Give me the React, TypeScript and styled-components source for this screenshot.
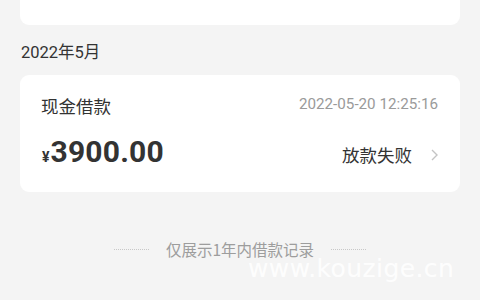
import styled, { createGlobalStyle } from 'styled-components';

const GlobalStyle = createGlobalStyle`
  html, body {
    margin: 0;
    background: #f4f4f4;
  }
  body {
    font-family: Roboto, 'Noto Sans CJK SC', sans-serif;
    color: #333;
  }
`;

const Page = styled.div`
  position: relative;
  width: 480px;
  height: 300px;
  overflow: hidden;
  padding: 0 20px;
  box-sizing: border-box;
  background: #f4f4f4;
`;

const Card = styled.div`
  background: #fff;
  border-radius: 9px;
`;

const TopCard = styled(Card)`
  height: 65px;
  margin-top: -40px;
`;

const MonthLabel = styled.div`
  margin: 17px 0 11px 1px;
  font-size: 16.5px;
  line-height: 22px;
  color: #333;
`;

const LoanCard = styled(Card)`
  display: flex;
  flex-direction: column;
  gap: 16px;
  padding: 18px 22px 17px 21px;
`;

const Row = styled.div`
  display: flex;
  align-items: center;
  justify-content: space-between;
`;

const Title = styled.div`
  font-size: 17.5px;
  line-height: 25px;
  color: #333;
  font-family: 'Noto Sans CJK SC', sans-serif;
`;

const DateText = styled.div`
  font-size: 15.2px;
  line-height: 20px;
  color: #9a9a9a;
  margin-top: -4px;
`;

const Amount = styled.div`
  display: flex;
  align-items: baseline;
  font-family: Roboto, sans-serif;
  font-weight: 700;
  color: #333;
  line-height: 36px;
`;

const Currency = styled.span`
  font-size: 14px;
  margin: 0 1px 0 1px;
`;

const Digits = styled.span`
  font-size: 30px;
  letter-spacing: 0.2px;
`;

const Status = styled.div`
  display: flex;
  align-items: center;
  gap: 19px;
  font-size: 17.5px;
  font-family: 'Noto Sans CJK SC', sans-serif;
  color: #333;
`;

const Footer = styled.div`
  display: flex;
  align-items: center;
  justify-content: center;
  gap: 17px;
  margin-top: 47px;
  font-size: 15.5px;
  line-height: 20px;
  color: #9d9d9d;
  font-family: 'Noto Sans CJK SC', sans-serif;
`;

const Dots = styled.span`
  width: 35px;
  border-top: 1px dotted #c8c8c8;
`;

const Watermark = styled.div`
  position: absolute;
  left: 248px;
  top: 254px;
  font-family: 'DejaVu Sans', sans-serif;
  font-size: 25px;
  letter-spacing: 0.4px;
  color: rgba(255, 255, 255, 0.9);
  pointer-events: none;
`;

const Chevron = () => (
  <svg width="7" height="12" viewBox="0 0 7 12">
    <path d="M1 1l5 5-5 5" fill="none" stroke="#c4c4c4" strokeWidth="1.4" />
  </svg>
);

export default function App() {
  return (
    <>
      <GlobalStyle />
      <Page>
        <TopCard />
        <MonthLabel>2022年5月</MonthLabel>
        <LoanCard>
          <Row>
            <Title>现金借款</Title>
            <DateText>2022-05-20 12:25:16</DateText>
          </Row>
          <Row>
            <Amount>
              <Currency>¥</Currency>
              <Digits>3900.00</Digits>
            </Amount>
            <Status>
              放款失败
              <Chevron />
            </Status>
          </Row>
        </LoanCard>
        <Footer>
          <Dots />
          仅展示1年内借款记录
          <Dots />
        </Footer>
        <Watermark>www.kouzige.cn</Watermark>
      </Page>
    </>
  );
}
